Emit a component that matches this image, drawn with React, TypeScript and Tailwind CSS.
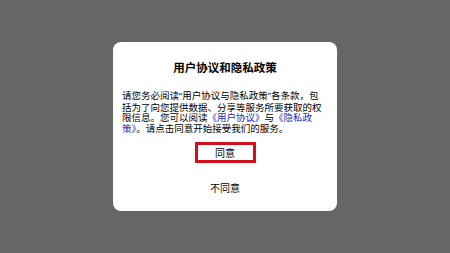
export default function App() {
  return (
    <div
      className="flex h-[253px] w-[450px] items-center justify-center bg-[#666666]"
      style={{ fontFamily: '"Noto Sans CJK SC", "Noto Sans", sans-serif' }}
    >
      <div className="flex h-[169px] w-[224px] flex-col items-center rounded-[8px] bg-white px-[9px] pt-[18px]">
        <h2 className="text-[11.5px] font-bold leading-[14px] text-black">用户协议和隐私政策</h2>
        <p className="mt-[16px] w-full whitespace-nowrap text-[9.5px] leading-[10.5px] text-black">
          请您务必阅读<span className="font-['Liberation_Sans']">“</span>用户协议与隐私政策
          <span className="font-['Liberation_Sans']">”</span>各条款，包
          <br />
          括为了向您提供数据、分享等服务所要获取的权
          <br />
          限信息。您可以阅读<span className="text-[#2a2ab8]">《用户协议》</span>与<span className="text-[#2a2ab8]">《隐私政</span>
          <br />
          <span className="text-[#2a2ab8]">策》</span>。请点击同意开始接受我们的服务。
        </p>
        <button className="mt-[9px] flex h-[21px] w-[61px] items-center justify-center border-[3px] border-[#d0101a] text-[10px] text-black">
          同意
        </button>
        <button className="mt-[19px] text-[10px] leading-[12px] text-black">不同意</button>
      </div>
    </div>
  );
}
